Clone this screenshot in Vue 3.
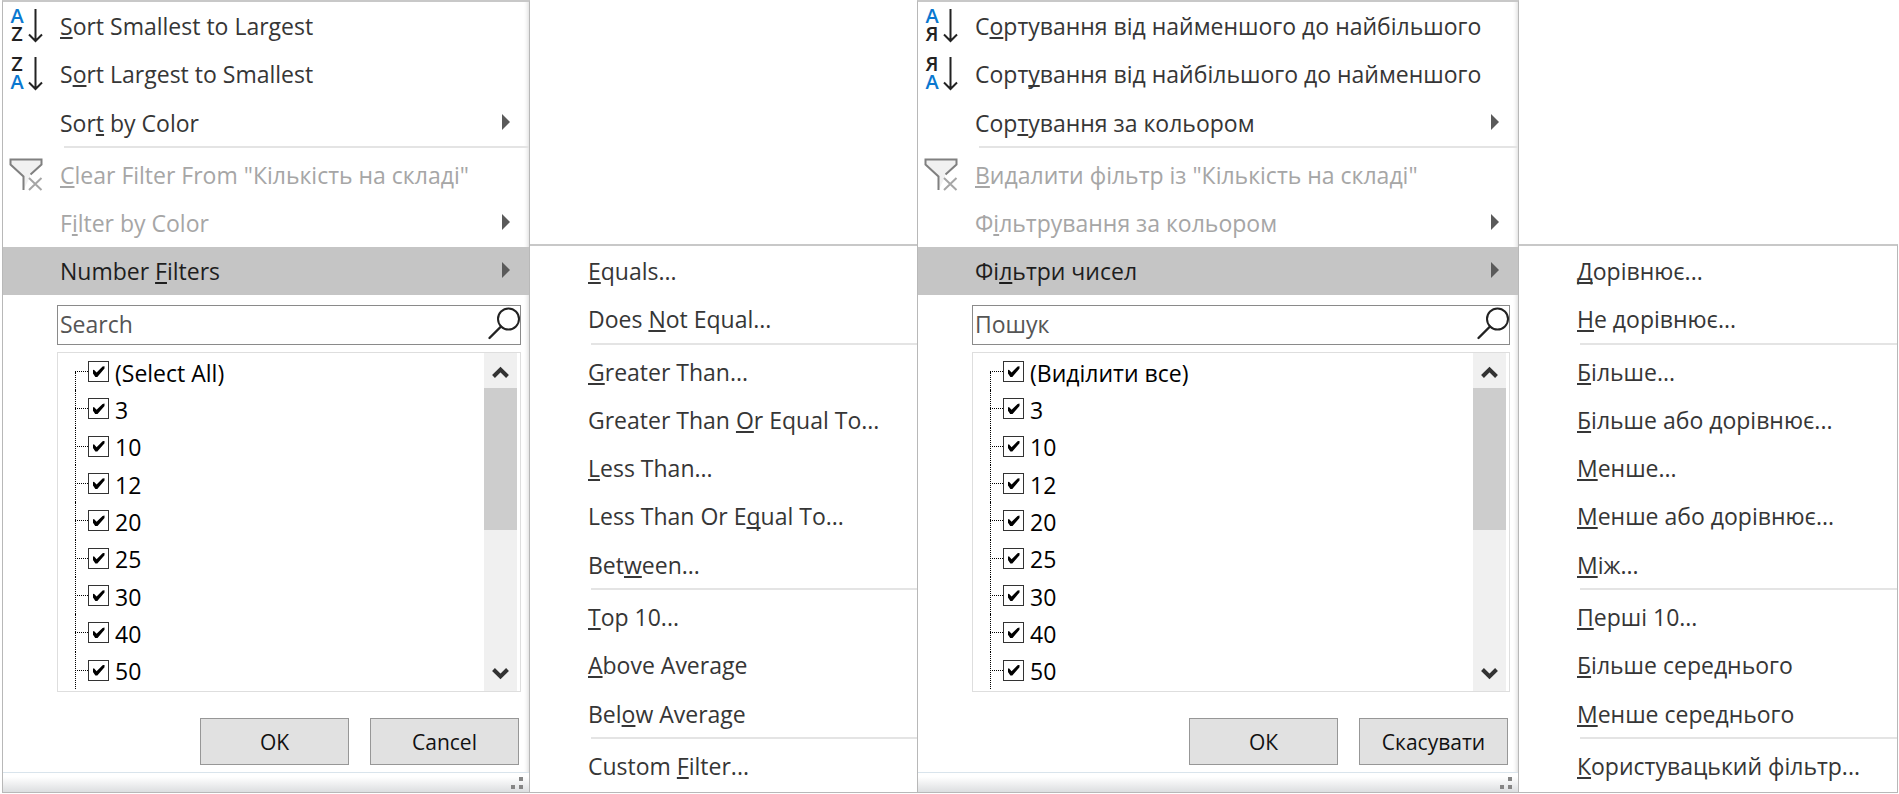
<script setup>
const values = ['3', '10', '12', '20', '25', '30', '40', '50']

// "&" precedes the access key of each label.
const menus = [
  {
    id: 'en',
    letters: ['A', 'Z'],
    sort: ['&Sort Smallest to Largest', 'S&ort Largest to Smallest'],
    sortColor: 'Sor&t by Color',
    clear: '&Clear Filter From "Кількість на складі"',
    filterColor: 'F&ilter by Color',
    number: 'Number &Filters',
    search: 'Search',
    items: ['(Select All)', ...values],
    ok: 'OK',
    cancel: 'Cancel',
    groups: [
      ['&Equals...', 'Does &Not Equal...'],
      ['&Greater Than...', 'Greater Than &Or Equal To...', '&Less Than...', 'Less Than Or E&qual To...', 'Bet&ween...'],
      ['&Top 10...', '&Above Average', 'Bel&ow Average'],
      ['Custom &Filter...'],
    ],
  },
  {
    id: 'uk',
    letters: ['А', 'Я'],
    sort: ['С&ортування від найменшого до найбільшого', 'Сорт&ування від найбільшого до найменшого'],
    sortColor: 'Сор&тування за кольором',
    clear: '&Видалити фільтр із "Кількість на складі"',
    filterColor: 'Ф&ільтрування за кольором',
    number: 'Фі&льтри чисел',
    search: 'Пошук',
    items: ['(Виділити все)', ...values],
    ok: 'ОК',
    cancel: 'Скасувати',
    groups: [
      ['&Дорівнює...', '&Не дорівнює...'],
      ['&Більше...', '&Більше або дорівнює...', '&Менше...', '&Менше або дорівнює...', '&Між...'],
      ['&Перші 10...', '&Більше середнього', '&Менше середнього'],
      ['&Користувацький фільтр...'],
    ],
  },
]

function html(label) {
  return label.replace(/&(.)/, '<u>$1</u>')
}
</script>

<template>
  <main class="page">
    <template v-for="m in menus" :key="m.id">
      <section class="panel" :lang="m.id">
        <div class="commands">
          <button v-for="(s, i) in m.sort" :key="s" type="button" class="row">
            <span class="icon">
              <span class="letters">
                <span :class="{ blue: i === 0 }">{{ m.letters[i] }}</span>
                <span :class="{ blue: i === 1 }">{{ m.letters[1 - i] }}</span>
              </span>
              <svg width="22" height="40" viewBox="18 0 22 40" aria-hidden="true">
                <path d="M27.5 3V35M21 28.5L27.5 35L34 28.5" fill="none" stroke="#222" stroke-width="2" />
              </svg>
            </span>
            <span class="label" v-html="html(s)"></span>
          </button>
          <button type="button" class="row">
            <span class="icon"></span>
            <span class="label" v-html="html(m.sortColor)"></span>
            <svg class="arrow" width="8" height="16" viewBox="0 0 8 16" aria-hidden="true"><path d="M0 0L8 8L0 16Z" /></svg>
          </button>
          <hr class="sep" />
          <button type="button" class="row" disabled>
            <span class="icon">
              <svg width="40" height="40" viewBox="0 0 40 40" aria-hidden="true">
                <path d="M22 19.5L33.5 9.5V4.5H2.5V9.5L15.5 21.5V35L22 22Z" fill="#f1f1f1" />
                <path d="M22.5 19.5L33.5 9.5V4.5H2.5V9.5L15.5 21.5V35" fill="none" stroke="#808080" stroke-width="2" />
                <path d="M21 23L33.5 35M33.5 23L21 35" fill="none" stroke="#a6a6a6" stroke-width="2" />
              </svg>
            </span>
            <span class="label" v-html="html(m.clear)"></span>
          </button>
          <button type="button" class="row" disabled>
            <span class="icon"></span>
            <span class="label" v-html="html(m.filterColor)"></span>
            <svg class="arrow" width="8" height="16" viewBox="0 0 8 16" aria-hidden="true"><path d="M0 0L8 8L0 16Z" /></svg>
          </button>
        </div>
        <button type="button" class="row active">
          <span class="icon"></span>
          <span class="label" v-html="html(m.number)"></span>
          <svg class="arrow" width="8" height="16" viewBox="0 0 8 16" aria-hidden="true"><path d="M0 0L8 8L0 16Z" /></svg>
        </button>

        <div class="body">
          <div class="search">
            <input type="text" :placeholder="m.search" :aria-label="m.search" />
            <svg width="33" height="38" viewBox="0 0 33 38" aria-hidden="true">
              <circle cx="21.5" cy="13" r="10.5" fill="none" stroke="#222" stroke-width="2" />
              <path d="M14 20.5L2.5 32" stroke="#222" stroke-width="2.4" stroke-linecap="round" />
            </svg>
          </div>
          <div class="list">
            <div class="tree">
              <label v-for="it in m.items" :key="it" class="item">
                <span class="branch"></span>
                <input type="checkbox" checked />
                <span class="value">{{ it }}</span>
              </label>
            </div>
            <div class="scroll">
              <svg width="33" height="35" viewBox="0 0 33 35" aria-hidden="true">
                <path d="M9.5 23.5L16.5 16.5L23.5 23.5" />
              </svg>
              <div class="track"><div class="thumb"></div></div>
              <svg width="33" height="34" viewBox="0 0 33 34" aria-hidden="true">
                <path d="M9.5 12.5L16.5 19.5L23.5 12.5" />
              </svg>
            </div>
          </div>
          <div class="actions">
            <button type="button">{{ m.ok }}</button>
            <button type="button">{{ m.cancel }}</button>
          </div>
        </div>
        <footer class="foot">
          <svg width="12" height="12" viewBox="0 0 12 12" aria-hidden="true">
            <path d="M8 0h4v4h-4zM0 8h4v4h-4zM8 8h4v4h-4z" fill="#858585" />
          </svg>
        </footer>
      </section>

      <nav class="submenu" :lang="m.id">
        <template v-for="(g, gi) in m.groups" :key="gi">
          <hr v-if="gi" class="sep" />
          <button v-for="o in g" :key="o" type="button" class="row">
            <span class="icon"></span>
            <span class="label" v-html="html(o)"></span>
          </button>
        </template>
      </nav>
    </template>
  </main>
</template>

<style>
body {
  background: #fff;
}
</style>

<style scoped>
.page,
.page * {
  box-sizing: border-box;
}
.page {
  display: grid;
  grid-template-columns: 528fr 387fr 602fr 379fr;
  min-height: 100vh;
  padding: 0 1px 1px 2px;
  font-family: "Open Sans", "Noto Sans", sans-serif;
  font-size: 23px;
  line-height: 32px;
  color: #363636;
}
button,
input {
  font: inherit;
  color: inherit;
  margin: 0;
}
.panel {
  display: flex;
  flex-direction: column;
  min-width: 0;
  border: 1px solid #b8b8b8;
  border-top: 2px solid #c8c8c8;
  box-shadow: inset -5px 0 4px -4px #d8d8d8;
}
.commands {
  display: flex;
  flex-direction: column;
  height: 245px;
}
.row {
  display: flex;
  align-items: center;
  flex: 1 0 40px;
  padding: 0 19px 0 0;
  border: 0;
  background: none;
  text-align: left;
  white-space: nowrap;
}
.row:disabled {
  color: #a6a6a6;
}
.row.active {
  flex: 0 0 48px;
  background: #c5c5c5;
  color: #1e1e1e;
}
.icon {
  display: flex;
  flex: 0 0 57px;
  padding-left: 5px;
}
.submenu .icon {
  flex-basis: 58px;
}
.label {
  flex: 1;
}
.label :deep(u) {
  text-decoration: underline;
  text-decoration-thickness: 2px;
  text-underline-offset: 2px;
  text-decoration-skip-ink: none;
}
.letters {
  display: grid;
  grid-template-rows: 18px 18px;
  width: 18px;
  padding-top: 1px;
  font-size: 20px;
  font-weight: 600;
  line-height: 18px;
  text-align: center;
  color: #222;
}
.blue {
  color: #0a78d0;
}
.arrow {
  flex: none;
  margin-bottom: 2px;
  fill: #5a5a5a;
}
.sep {
  flex: none;
  height: 5px;
  margin: -1px 0 0 61px;
  border: 0;
  border-top: 2px solid #e4e4e4;
}
.body {
  display: flex;
  flex-direction: column;
  flex: 1;
  padding: 10px 8px 7px 54px;
}
.search {
  display: flex;
  height: 40px;
  border: 1px solid #8a8a8a;
}
.search input {
  flex: 1;
  min-width: 0;
  padding: 0 2px 2px;
  border: 0;
  outline: 0;
  background: none;
}
.search input::placeholder {
  color: #555;
  opacity: 1;
}
.list {
  display: flex;
  flex: 1;
  margin-top: 7px;
  padding-right: 3px;
  border: 1px solid #dedede;
}
.tree {
  display: flex;
  flex-direction: column;
  flex: 1;
  padding: 0 0 2px 17px;
}
.item {
  display: flex;
  align-items: center;
  flex: 1 0 36px;
  position: relative;
  color: #000;
}
.item::before {
  content: "";
  position: absolute;
  inset: 0 auto 0 0;
  border-left: 1px dotted #000;
}
.item:first-child::before {
  top: 50%;
}
.branch {
  width: 13px;
  border-top: 1px dotted #000;
}
.item input {
  appearance: none;
  display: grid;
  place-items: center;
  width: 21px;
  height: 21px;
  border: 1px solid #333;
  background: #fff;
}
.item input:checked::before {
  content: "";
  width: 12px;
  height: 11px;
  background: #000;
  clip-path: polygon(0 38%, 12% 32%, 34% 58%, 84% 4%, 100% 0, 100% 22%, 40% 98%, 24% 98%, 4% 66%);
}
.value {
  padding: 2px 0 0 6px;
}
.scroll {
  display: flex;
  flex-direction: column;
  width: 33px;
  background: #f0f0f0;
}
.scroll svg {
  flex: none;
}
.scroll path {
  fill: none;
  stroke: #333;
  stroke-width: 4;
}
.track {
  flex: 1;
}
.thumb {
  height: 142px;
  background: #cdcdcd;
}
.actions {
  display: flex;
  justify-content: flex-end;
  gap: 21px;
  margin-top: 26px;
  padding-right: 2px;
}
.actions button {
  width: 149px;
  height: 47px;
  padding: 0;
  border: 1px solid #979797;
  background: #e1e1e1;
  color: #111;
  font-size: 21px;
}
.foot {
  display: flex;
  justify-content: flex-end;
  align-items: center;
  height: 20px;
  padding-right: 6px;
  border-top: 1px solid #d9e4ec;
  background: linear-gradient(#fff 20%, #dcdee0);
}
.submenu {
  display: flex;
  flex-direction: column;
  min-width: 0;
  margin-top: 244px;
  padding: 1px 0 2px;
  border-top: 2px solid #c8c8c8;
  border-bottom: 1px solid #b8b8b8;
}
.submenu:last-child {
  border-right: 1px solid #b8b8b8;
}
</style>
